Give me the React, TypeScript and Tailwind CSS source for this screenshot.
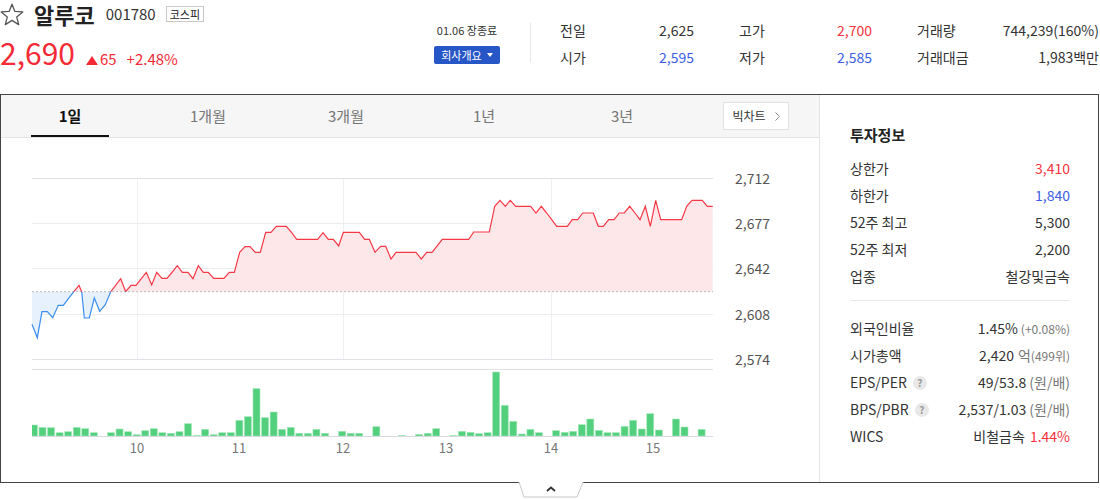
import React from "react";

const PTS: [number, number][] = [
  [32, 324.3], [37.3, 337.7], [42, 311.7], [47.3, 311.7], [52.7, 317.7], [58.3, 305.3], [63.3, 305.3], [68.3, 298.7], [73.3, 292.3], [79, 285.3], [81.7, 291.7], [84.3, 318], [89.3, 318], [94.3, 298], [99.7, 311.3], [105.3, 304.7], [110.7, 291.7], [120.7, 278.7], [125.7, 291.7], [131, 285.3], [136, 285.3], [141.3, 278.7], [146.3, 272.3], [151.7, 285], [156.7, 272.3], [162, 278.3], [167, 278.3], [172.3, 272], [177.3, 265.7], [182.3, 272.3], [188, 272.3], [193, 278.7], [198.3, 265.7], [203.3, 272.3], [208.3, 272.3], [213.7, 278.3], [224, 278.3], [229.3, 272.3], [234.3, 272.3], [239.7, 252.3], [245, 246.7], [250, 246.7], [255.3, 252.3], [260.3, 252.3], [265.7, 232.3], [271, 232.3], [276.3, 226.3], [286.3, 226.3], [291.7, 232.7], [296.7, 239.3], [317.7, 239.3], [323, 232.7], [328.3, 239.3], [333.3, 239.3], [338.7, 246], [343.3, 232.3], [359.3, 232.3], [364.7, 239.3], [369.3, 239.3], [375, 252.3], [380.7, 246.3], [385.7, 246.3], [391, 259], [396, 252.3], [416, 252.3], [421.3, 259], [426.7, 252.3], [432, 252.3], [442.3, 239.3], [468.7, 239.3], [473.7, 232], [489.3, 232], [494.7, 206.3], [500, 200.3], [505.3, 206.3], [510.3, 200.3], [515.7, 206.3], [530.7, 206.3], [536, 213], [541.3, 206.3], [546.7, 213], [551.7, 219.7], [556.7, 226.3], [567.3, 226.3], [572.3, 219.7], [577.7, 219.7], [582.7, 213], [593.3, 213], [598.3, 226.3], [603.3, 226.3], [608.7, 219.7], [614, 219.7], [619.3, 213], [624.3, 213], [629.7, 206.3], [635, 213], [640, 219.7], [645.3, 206.3], [650.3, 226.3], [655.7, 200.3], [660.7, 219.7], [681.7, 219.7], [686.7, 206.3], [692, 200.3], [702.3, 200.3], [707.3, 206.3], [712.7, 206.3],
];

const VOL = [11, 8.7, 8.3, 3.3, 4.3, 8.7, 7.3, 3.3, 0, 3.3, 7, 4.3, 1.3, 5.3, 7.3, 3.3, 2.7, 4.3, 12.3, 0.6, 6.7, 1.3, 3.3, 3.3, 15.7, 19.3, 47.3, 18.3, 24, 6.7, 8.7, 2.7, 2.7, 6.7, 2.7, 0, 4.7, 2.7, 2.7, 0, 9.3, 0, 0, 0.5, 0, 1.7, 2.7, 7.3, 0, 0.7, 4.7, 3.7, 2.3, 3.3, 64, 30.7, 14.7, 2, 6.7, 3.3, 0, 5.3, 3.7, 4.7, 11.3, 17, 5.7, 3.3, 3.3, 9.7, 15.7, 7, 22.3, 6, 0, 17, 9, 0, 6.7];

const BASE = 291.7;

function Chart() {
  const line = PTS.map((p, i) => `${i ? "L" : "M"}${p[0]},${p[1]}`).join(" ");
  const area = `M32,${BASE} ` + PTS.map((p) => `L${p[0]},${p[1]}`).join(" ") + ` L712.7,${BASE} Z`;
  const yLabels: [string, number][] = [
    ["2,712", 178],
    ["2,677", 223],
    ["2,642", 268],
    ["2,608", 314],
    ["2,574", 359],
  ];
  const xLabels: [string, number][] = [
    ["10", 137],
    ["11", 239],
    ["12", 343],
    ["13", 446],
    ["14", 551],
    ["15", 653],
  ];
  return (
    <svg width="818" height="344" viewBox="1 138 818 344" className="block">
      <defs>
        <clipPath id="up">
          <rect x="0" y="0" width="820" height={BASE} />
        </clipPath>
        <clipPath id="down">
          <rect x="0" y={BASE} width="820" height="300" />
        </clipPath>
        <clipPath id="vol">
          <rect x="32" y="360" width="681" height="80" />
        </clipPath>
      </defs>
      {[137, 343, 551].map((x) => (
        <line key={x} x1={x + 0.5} y1="178" x2={x + 0.5} y2="359" stroke="#efefef" strokeWidth="1" />
      ))}
      <line x1="32" y1="178.5" x2="713" y2="178.5" stroke="#dfe2e8" />
      {[223, 268, 314].map((y) => (
        <line key={y} x1="32" y1={y + 0.5} x2="713" y2={y + 0.5} stroke="#ececec" />
      ))}
      <line x1="32" y1="359.5" x2="713" y2="359.5" stroke="#dfe2e8" />
      <line x1="32" y1="369.5" x2="713" y2="369.5" stroke="#dfe2e8" />

      <path d={area} fill="#fde7e9" clipPath="url(#up)" />
      <path d={area} fill="#e6f1fd" clipPath="url(#down)" />
      <line x1="32" y1={BASE} x2="713" y2={BASE} stroke="#b9b9b9" strokeWidth="1" strokeDasharray="2 2" />
      <path d={line} fill="none" stroke="#f53845" strokeWidth="1.2" clipPath="url(#up)" />
      <path d={line} fill="none" stroke="#3b8ff0" strokeWidth="1.2" clipPath="url(#down)" />

      <g clipPath="url(#vol)">
        {VOL.map((h, i) =>
          h > 0 ? (
            <rect
              key={i}
              x={30.44 + 8.56 * i}
              y={436 - h}
              width="7"
              height={h}
              fill="#53d07d"
              stroke="#a3e8b8"
              strokeWidth="0.6"
            />
          ) : null
        )}
      </g>
      <line x1="32" y1="436.5" x2="713" y2="436.5" stroke="#d6d9df" />

      {yLabels.map(([t, y]) => (
        <text key={t} x="735" y={y} dominantBaseline="central" fontSize="14" fill="#555">
          {t}
        </text>
      ))}
      {xLabels.map(([t, x]) => (
        <text key={t} x={x} y="447" textAnchor="middle" dominantBaseline="central" fontSize="13" fill="#777">
          {t}
        </text>
      ))}
    </svg>
  );
}

function Star() {
  return (
    <svg width="24" height="23" viewBox="0 0 24 23">
      <polygon
        points="12,1.2 14.9,8.4 22.8,8.9 16.7,13.9 18.7,21.6 12,17.4 5.3,21.6 7.3,13.9 1.2,8.9 9.1,8.4"
        fill="none"
        stroke="#555"
        strokeWidth="1.3"
        strokeLinejoin="round"
      />
    </svg>
  );
}

function Q() {
  return (
    <span className="ml-[6px] inline-flex w-[14px] h-[14px] rounded-full bg-[#e8e8e8] text-[#9a9a9a] text-[10px] leading-[14px] items-center justify-center font-bold">
      ?
    </span>
  );
}

function Cell({ label, value, color }: { label: string; value: string; color: string }) {
  return (
    <div className="flex justify-between items-center h-[27px] text-[14px] leading-[17px]">
      <span className="text-[#333]">{label}</span>
      <span className={color}>{value}</span>
    </div>
  );
}

function Row({ label, children }: { label: React.ReactNode; children: React.ReactNode }) {
  return (
    <div className="flex justify-between items-center h-[27px] text-[14px] leading-[17px]">
      <span className="flex items-center text-[#333]">{label}</span>
      <span className="flex items-baseline">{children}</span>
    </div>
  );
}

export default function App() {
  const tabs = ["1일", "1개월", "3개월", "1년", "3년"];
  return (
    <div className="relative w-[1100px] h-[499px] bg-white overflow-hidden font-['Noto_Sans_CJK_KR',sans-serif] text-[#333]">
      {/* header */}
      <div className="flex h-[94px]">
        <div className="w-[434px] flex flex-col">
          <div className="flex items-center h-[28px]">
            <Star />
            <span className="ml-[10px] text-[22px] font-bold leading-[28px] text-[#222]">알루코</span>
            <span className="ml-[11px] text-[15px] leading-[24px] text-[#333]">001780</span>
            <span className="ml-[10px] border border-[#c9c9c9] h-[16px] px-[3px] text-[11px] leading-[14px] text-[#222] flex items-center">
              코스피
            </span>
          </div>
          <div className="flex items-baseline mt-[6px] h-[36px]">
            <span className="text-[30px] leading-[36px] text-[#f42a36]">2,690</span>
            <span className="ml-[11px] flex items-baseline text-[15px] leading-[18px] text-[#f42a36]">
              <svg width="12" height="9" viewBox="0 0 12 9" className="mr-[2px]">
                <polygon points="6,0 12,9 0,9" fill="#f42a36" />
              </svg>
              65
            </span>
            <span className="ml-[10px] text-[15px] leading-[18px] text-[#f42a36]">+2.48%</span>
          </div>
        </div>
        <div className="w-[66px] flex flex-col items-center pt-[23px]">
          <div className="text-[11px] leading-[14px] text-[#333] whitespace-nowrap">01.06 장종료</div>
          <div className="mt-[9px] w-[66px] h-[18px] bg-[#2756c6] rounded-[2px] text-white text-[11px] leading-[18px] flex items-center justify-center gap-[5px]">
            회사개요
            <svg width="6" height="4" viewBox="0 0 6 4">
              <polygon points="0,0 6,0 3,4" fill="#fff" />
            </svg>
          </div>
        </div>
        <div className="ml-[30px] mt-[23px] w-px h-[40px] bg-[#e6e6e6]" />
        <div className="ml-[29px] pt-[17px] grid grid-cols-[134px_133px_182px] gap-x-[45px] h-fit">
          <Cell label="전일" value="2,625" color="text-[#333]" />
          <Cell label="고가" value="2,700" color="text-[#f4333d]" />
          <Cell label="거래량" value="744,239(160%)" color="text-[#333]" />
          <Cell label="시가" value="2,595" color="text-[#3d5ee3]" />
          <Cell label="저가" value="2,585" color="text-[#3d5ee3]" />
          <Cell label="거래대금" value="1,983백만" color="text-[#333]" />
        </div>
      </div>

      {/* main box */}
      <div className="flex w-[1099px] h-[389px] border border-[#444]">
        <div className="w-[818px] flex flex-col">
          <div className="h-[43px] flex bg-[#f6f6f6] border-b border-[#e4e4e4]">
            {tabs.map((t, i) => (
              <div
                key={t}
                className={
                  i === 0
                    ? "relative w-[138px] flex items-center justify-center text-[15px] leading-[18px] font-bold text-[#111]"
                    : "relative w-[138px] flex items-center justify-center text-[15px] leading-[18px] text-[#777]"
                }
              >
                {t}
                {i === 0 && <span className="absolute bottom-0 left-[30px] w-[78px] h-[2px] bg-[#111]" />}
              </div>
            ))}
            <div className="self-center ml-[32px] h-[28px] w-[66px] bg-white border border-[#e2e2e2] flex items-center justify-center gap-[9px] text-[12px] leading-[16px] text-[#333]">
              빅차트
              <svg width="5" height="9" viewBox="0 0 5 9">
                <polyline points="0.5,0.5 4.5,4.5 0.5,8.5" fill="none" stroke="#888" strokeWidth="1" />
              </svg>
            </div>
          </div>
          <Chart />
        </div>
        <div className="flex-1 border-l border-[#e5e5e5] pl-[30px] pr-[28px] pt-[29px]">
          <div className="text-[15px] leading-[22px] font-bold text-[#222]">투자정보</div>
          <div className="mt-[9px]">
            <Row label="상한가">
              <span className="text-[#f4333d]">3,410</span>
            </Row>
            <Row label="하한가">
              <span className="text-[#3d5ee3]">1,840</span>
            </Row>
            <Row label="52주 최고">
              <span>5,300</span>
            </Row>
            <Row label="52주 최저">
              <span>2,200</span>
            </Row>
            <Row label="업종">
              <span>철강및금속</span>
            </Row>
          </div>
          <div className="mt-[10px] h-px bg-[#e8e8e8]" />
          <div className="mt-[14px]">
            <Row label="외국인비율">
              <span>1.45%</span>
              <span className="ml-[3px] text-[12px] text-[#777]">(+0.08%)</span>
            </Row>
            <Row label="시가총액">
              <span>2,420</span>
              <span className="ml-[4px] text-[#777]">억</span>
              <span className="text-[12px] text-[#777]">(499위)</span>
            </Row>
            <Row
              label={
                <>
                  EPS/PER
                  <Q />
                </>
              }
            >
              <span>49/53.8</span>
              <span className="ml-[3px] text-[#777]">(원/배)</span>
            </Row>
            <Row
              label={
                <>
                  BPS/PBR
                  <Q />
                </>
              }
            >
              <span>2,537/1.03</span>
              <span className="ml-[3px] text-[#777]">(원/배)</span>
            </Row>
            <Row label="WICS">
              <span>비철금속</span>
              <span className="ml-[5px] text-[#f4333d]">1.44%</span>
            </Row>
          </div>
        </div>
      </div>

      {/* bottom toggle */}
      <svg className="absolute left-[518px] top-[482px]" width="66" height="17" viewBox="0 0 66 17">
        <polygon points="1,0 65,0 59,15 6,15" fill="#fff" />
        <polyline points="1,0 6,15 59,15 65,0" fill="none" stroke="#c8c8c8" strokeWidth="1" />
        <polyline points="29,9 33,5.5 37,9" fill="none" stroke="#333" strokeWidth="1.8" />
      </svg>
    </div>
  );
}
